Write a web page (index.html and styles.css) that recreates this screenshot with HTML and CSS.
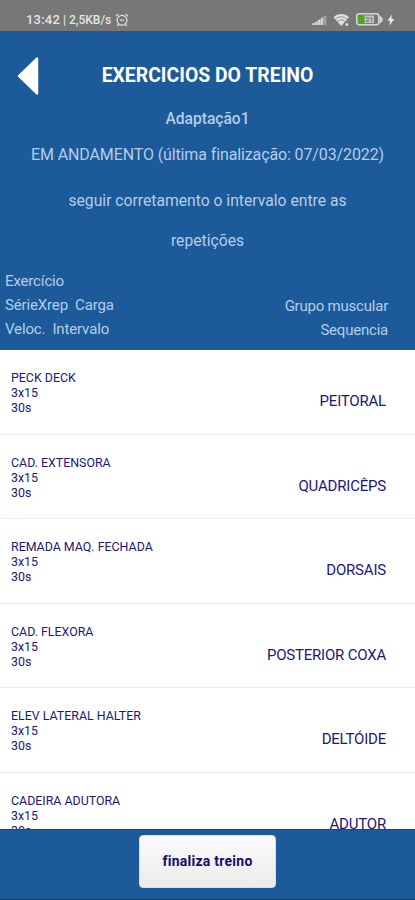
FILE: index.html
```html
<!DOCTYPE html>
<html lang="pt-BR">
<head>
    <meta charset="UTF-8">
    <meta name="viewport" content="width=device-width, initial-scale=1.0">
    <title>Exercicios do Treino</title>
    <link rel="stylesheet" href="styles.css">
</head>
<body>
    <div class="app">
        <!-- Barra de status -->
        <div class="status">
            <span class="clock">13:42</span>
            <span class="speed">| 2,5KB/s</span>
            <svg class="alarm" width="14" height="14" viewBox="0 0 14 14" fill="none" stroke="#dedede" stroke-width="1.3">
                <circle cx="7" cy="7.3" r="4.9"/>
                <path d="M1 3.2L3.4 1M13 3.2L10.6 1M3.4 11.5L2.3 13M10.6 11.5L11.7 13M5 7.2h4"/>
            </svg>
            <div class="status-icons">
                <svg width="15" height="12" viewBox="0 0 15 12" fill="#d2d2d2">
                    <path d="M0 11V9.6L2.4 8.7V11zM2.7 11V8.4L5.4 7V11zM5.7 11V6.6L8.4 5V11zM8.7 11V4.6L11.4 2.7V11z"/>
                    <path d="M12 11V2.3L14.4 1V11z" fill="#a0a0a0"/>
                </svg>
                <svg width="17" height="14" viewBox="0 0 17 14">
                    <path d="M0.5 4.2C5 0 11.5 0 16 4.2L8.3 13z" fill="#dedede"/>
                    <path d="M2.5 6C6 3 10.5 3 14 6M4.8 8.2c2.2-1.8 4.7-1.8 6.9 0" fill="none" stroke="#8c8c8c" stroke-width="0.9"/>
                    <circle cx="13.8" cy="11.6" r="2.3" fill="#777"/>
                    <circle cx="13.8" cy="11.6" r="1.5" fill="#dedede"/>
                </svg>
                <svg width="27" height="13" viewBox="0 0 27 13">
                    <rect x="0.8" y="0.8" width="22" height="11" rx="2.5" fill="#777" stroke="#d6d6d6" stroke-width="1.6"/>
                    <path d="M23.5 2L26.6 5v3L23.5 11z" fill="#d6d6d6"/>
                    <rect x="8" y="2.5" width="10" height="7.6" fill="#c4c4c4"/>
                    <rect x="2.2" y="2.5" width="6.5" height="7.6" rx="1.5" fill="#48ad16"/>
                    <text class="battery-text" x="9.5" y="9">21</text>
                </svg>
                <svg width="8" height="12" viewBox="0 0 8 12"><path d="M4.8 0.5L0.6 6.7h2.7L2.4 11.5L7.3 5H4.3z" fill="#eee"/></svg>
            </div>
        </div>

        <!-- Cabeçalho do treino -->
        <header class="header">
            <svg class="back" width="22" height="40" viewBox="0 0 22 40"><path d="M2 20L20 2.5V37.5z" fill="#fff" stroke="#fff" stroke-width="2.4" stroke-linejoin="round"/></svg>
            <h1>EXERCICIOS DO TREINO</h1>
            <p class="plan">Adaptação1</p>
            <p class="progress">EM ANDAMENTO (última finalização: 07/03/2022)</p>
            <p class="note">seguir corretamento o intervalo entre as<br>repetições</p>
            <div class="columns">
                <div class="columns-left">Exercício<br>SérieXrep&nbsp; Carga<br>Veloc.&nbsp; Intervalo</div>
                <div class="columns-right">Grupo muscular<br>Sequencia</div>
            </div>
        </header>

        <!-- Lista de exercícios -->
        <main class="list">
            <div class="item">
                <div class="exercise">PECK DECK<br>3x15<br>30s</div>
                <div class="muscle">PEITORAL</div>
            </div>
            <div class="item">
                <div class="exercise">CAD. EXTENSORA<br>3x15<br>30s</div>
                <div class="muscle">QUADRICÊPS</div>
            </div>
            <div class="item">
                <div class="exercise">REMADA MAQ. FECHADA<br>3x15<br>30s</div>
                <div class="muscle">DORSAIS</div>
            </div>
            <div class="item">
                <div class="exercise">CAD. FLEXORA<br>3x15<br>30s</div>
                <div class="muscle">POSTERIOR COXA</div>
            </div>
            <div class="item">
                <div class="exercise">ELEV LATERAL HALTER<br>3x15<br>30s</div>
                <div class="muscle">DELTÓIDE</div>
            </div>
            <div class="item">
                <div class="exercise">CADEIRA ADUTORA<br>3x15<br>30s</div>
                <div class="muscle">ADUTOR</div>
            </div>
        </main>

        <footer class="footer">
            <button class="finish">finaliza treino</button>
        </footer>
    </div>
</body>
</html>
```
FILE: styles.css
```css
* { box-sizing: border-box; }
body { margin: 0; font-family: Roboto, sans-serif; background: #fff; }
.app { display: flex; flex-direction: column; width: 415px; height: 900px; overflow: hidden; }

.status { display: flex; align-items: center; flex: none; height: 31px; padding: 8px 20px 0 26px; background: #777; color: #e4e4e4; white-space: nowrap; }
.clock { font-size: 13px; font-weight: 500; letter-spacing: 0.2px; }
.speed { margin-left: 3px; font-size: 12px; font-weight: 500; }
.alarm { margin-left: 4px; }
.status-icons { display: flex; align-items: center; gap: 6px; margin-left: auto; }
.status-icons svg:last-child { margin-left: -2px; }
.battery-text { font-size: 7px; font-weight: bold; fill: #777; }

.header { position: relative; flex: none; height: 319px; background: #1c5a99; color: #b4cdeb; text-align: center; }
.back { position: absolute; left: 17px; top: 25px; }
h1 { margin: 0; padding-top: 33px; font-size: 19.4px; line-height: 24px; font-weight: bold; color: #fff; }
.header p { margin: 0; }
.header .plan { padding-top: 19px; font-size: 15.6px; line-height: 24px; font-weight: 500; }
.header .progress { margin-top: 12px; font-size: 16px; line-height: 24px; letter-spacing: -0.12px; white-space: nowrap; }
.note { padding-top: 14px; font-size: 15.7px; line-height: 40px; }
.columns { display: flex; justify-content: space-between; align-items: flex-end; margin-top: 8px; padding: 0 27px 0 5px; font-size: 15px; line-height: 24px; letter-spacing: -0.15px; }
.columns-left { text-align: left; }
.columns-right { position: relative; top: 1px; text-align: right; letter-spacing: -0.22px; }

.list { flex: 1; min-height: 0; overflow: hidden; color: #23167a; }
.item { display: flex; justify-content: space-between; height: 84.6px; padding: 20px 29px 0 11px; border-bottom: 1px solid #ececec; }
.exercise { font-size: 12.4px; line-height: 15px; }
.muscle { padding-top: 21px; font-size: 15px; line-height: 20px; letter-spacing: -0.2px; }

.footer { display: flex; justify-content: center; flex: none; height: 71px; padding-top: 5px; background: #1c5a99; border-top: 1px solid #0d4b8c; border-bottom: 1px solid #123a68; }
.finish { width: 137px; height: 53px; padding: 0 0 2px; border: 1px solid #d5e2ee; border-radius: 4px; background: linear-gradient(#fbfbfb, #ebebeb); color: #170a72; font-family: Roboto, sans-serif; font-size: 14px; font-weight: bold; letter-spacing: 0.25px; }
```
